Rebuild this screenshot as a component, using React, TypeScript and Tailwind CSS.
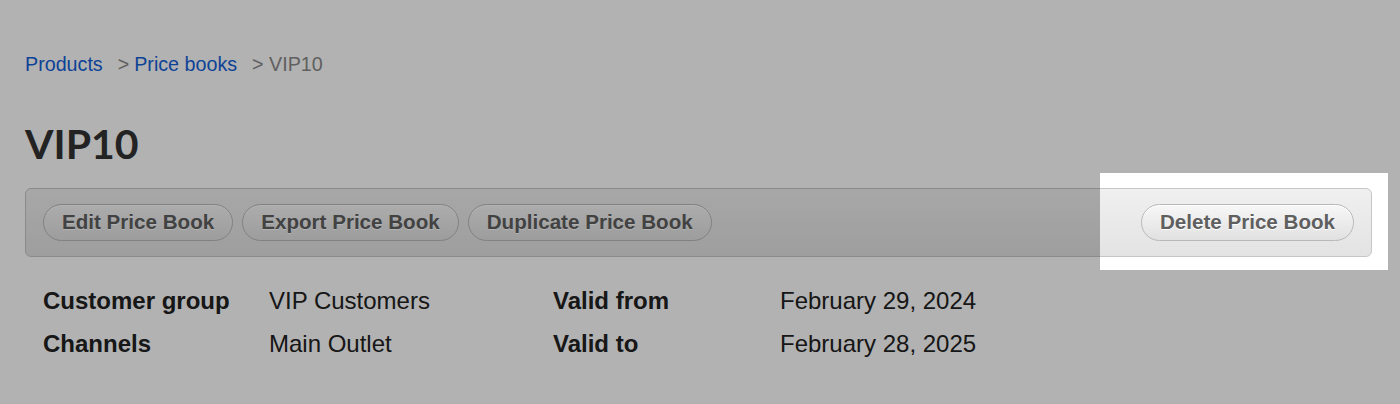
const actions = ['Edit Price Book', 'Export Price Book', 'Duplicate Price Book']

const details = [
  { label: 'Customer group', value: 'VIP Customers', label2: 'Valid from', value2: 'February 29, 2024' },
  { label: 'Channels', value: 'Main Outlet', label2: 'Valid to', value2: 'February 28, 2025' },
]

function ToolbarButton({ children }: { children: string }) {
  return (
    <button className="h-[37px] rounded-full border border-[#b9b9b9] bg-gradient-to-b from-[#f7f7f7] to-[#e1e1e1] px-[18px] text-[20.6px] font-bold leading-none text-[#5f5f5f] [text-shadow:0_1px_0_#fff] shadow-[inset_0_1px_0_#fff]">
      {children}
    </button>
  )
}

export default function App() {
  return (
    <div className="relative h-[404px] w-full overflow-hidden bg-white font-['Liberation_Sans',Arial,sans-serif] text-[#333]">
      <div className="px-[25px] pt-[52px]">
        {/* breadcrumb */}
        <nav className="flex items-center text-[19.7px] leading-6">
          <a className="text-[#1360d8]">Products</a>
          <span className="ml-[15px] text-[#8a8a8a]">&gt;</span>
          <a className="ml-[5px] text-[#1360d8]">Price books</a>
          <span className="ml-[15px] text-[#8a8a8a]">&gt; VIP10</span>
        </nav>

        <h1 className="mt-[42px] font-['Lato',sans-serif] text-[41px] font-bold leading-[52px] text-[#333]">VIP10</h1>

        {/* toolbar */}
        <div className="mt-[18px] mr-[3px] flex items-center justify-between rounded-[6px] border border-[#c6c6c6] bg-gradient-to-b from-[#f0f0f0] to-[#e3e3e3] px-[17px] py-[15px]">
          <div className="flex gap-[9px]">
            {actions.map((a) => (
              <ToolbarButton key={a}>{a}</ToolbarButton>
            ))}
          </div>
          <ToolbarButton>Delete Price Book</ToolbarButton>
        </div>

        {/* details */}
        <div className="mt-[29px] grid grid-cols-[226px_284px_227px_auto] gap-y-[13px] pl-[18px] text-[24px] leading-[30px] text-[#222]">
          {details.map((d) => (
            <div key={d.label} className="contents">
              <span className="font-bold">{d.label}</span>
              <span>{d.value}</span>
              <span className="font-bold">{d.label2}</span>
              <span>{d.value2}</span>
            </div>
          ))}
        </div>
      </div>

      {/* tour spotlight */}
      <div className="pointer-events-none absolute left-[1100px] top-[173px] h-[97px] w-[288px] shadow-[0_0_0_2000px_rgba(0,0,0,0.3)]" />
    </div>
  )
}
